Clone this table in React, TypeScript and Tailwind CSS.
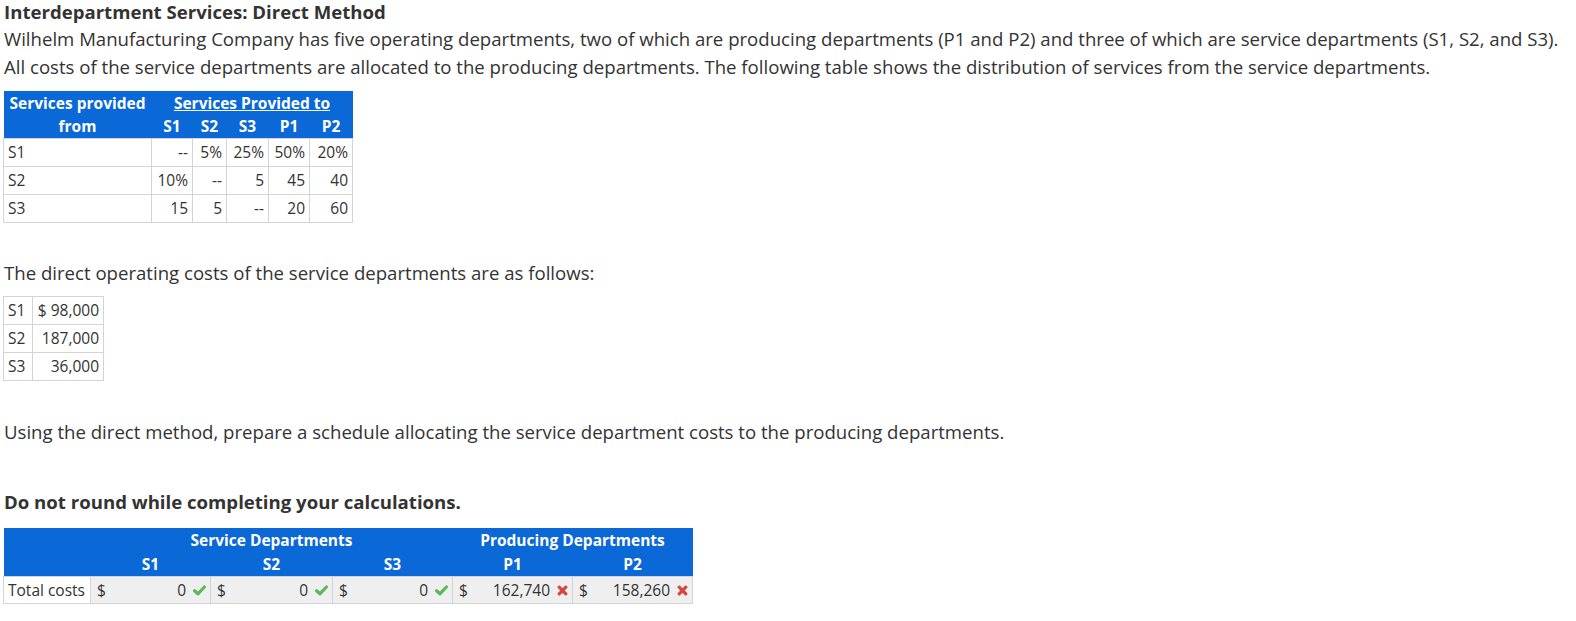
import React from 'react';

const BLUE = 'bg-[#0b68d7]';

function Check() {
    return (
        <svg width="13" height="11" viewBox="0 0 13 11" className="inline-block">
            <path d="M1.6 5.8 L4.9 8.8 L11.4 2" fill="none" stroke="#5cb85c" strokeWidth="3.2" strokeLinecap="round" strokeLinejoin="round" />
        </svg>
    );
}

function Cross() {
    return (
        <svg width="11" height="11" viewBox="0 0 11 11" className="inline-block">
            <path d="M2.2 2.2 L8.8 8.8 M8.8 2.2 L2.2 8.8" fill="none" stroke="#d9453b" strokeWidth="3.2" strokeLinecap="round" />
        </svg>
    );
}

const distribution = [
    ['S1', '--', '5%', '25%', '50%', '20%'],
    ['S2', '10%', '--', '5', '45', '40'],
    ['S3', '15', '5', '--', '20', '60'],
];

const costs = [
    ['S1', '$ 98,000'],
    ['S2', '187,000'],
    ['S3', '36,000'],
];

const totals = [
    { value: '0', ok: true },
    { value: '0', ok: true },
    { value: '0', ok: true },
    { value: '162,740', ok: false },
    { value: '158,260', ok: false },
];

export default function App() {
    return (
        <div className="bg-white min-h-[621px] text-[#333] px-[3px]" style={{ fontFamily: '"Open Sans", "Liberation Sans", sans-serif' }}>
            <div className="px-px">
                <h1 className="text-[18.6px] leading-[24px] font-bold">Interdepartment Services: Direct Method</h1>
                <p className="text-[18.6px] leading-[28px] mt-px">
                    Wilhelm Manufacturing Company has five operating departments, two of which are producing departments (P1 and P2) and three of which are service departments (S1, S2, and S3). All costs of the service departments are allocated to the producing departments. The following table shows the distribution of services from the service departments.
                </p>
            </div>

            {/* distribution of services */}
            <table className="mt-[10px] border-collapse text-[15.5px] leading-[20px]">
                <thead>
                    <tr className={`${BLUE} text-white font-bold`}>
                        <th className="w-[148px] h-[23px] text-center font-bold">Services provided</th>
                        <th colSpan={5} className="text-center font-bold underline">Services Provided to</th>
                    </tr>
                    <tr className={`${BLUE} text-white`}>
                        <th className="h-[24px] text-center font-bold">from</th>
                        <th className="w-[41px] text-center font-bold">S1</th>
                        <th className="w-[34px] text-center font-bold">S2</th>
                        <th className="w-[42px] text-center font-bold">S3</th>
                        <th className="w-[41px] text-center font-bold">P1</th>
                        <th className="w-[43px] text-center font-bold">P2</th>
                    </tr>
                </thead>
                <tbody>
                    {distribution.map((row) => (
                        <tr key={row[0]} className="h-[28px]">
                            {row.map((cell, i) => (
                                <td
                                    key={i}
                                    className={`border border-[#d4d4d4] px-[4px] font-normal ${i === 0 ? 'text-left' : 'text-right'}`}
                                >
                                    {cell}
                                </td>
                            ))}
                        </tr>
                    ))}
                </tbody>
            </table>

            <p className="px-px mt-[36px] text-[18.6px] leading-[28px]">The direct operating costs of the service departments are as follows:</p>

            <table className="mt-[9px] border-collapse text-[15.5px] leading-[20px]">
                <tbody>
                    {costs.map(([dept, amt]) => (
                        <tr key={dept} className="h-[28px]">
                            <td className="border border-[#d4d4d4] w-[29px] px-[4px] text-left">{dept}</td>
                            <td className="border border-[#d4d4d4] w-[71px] px-[4px] text-right">{amt}</td>
                        </tr>
                    ))}
                </tbody>
            </table>

            <p className="px-px mt-[37px] text-[18.6px] leading-[28px]">
                Using the direct method, prepare a schedule allocating the service department costs to the producing departments.
            </p>

            <p className="px-px mt-[42px] text-[18.6px] leading-[28px] font-bold">Do not round while completing your calculations.</p>

            {/* allocation schedule */}
            <table className="mt-[12px] border-collapse text-[15.5px] leading-[20px]">
                <thead>
                    <tr className={`${BLUE} text-white`}>
                        <th className="w-[87px] h-[24px]"></th>
                        <th colSpan={3} className="text-center font-bold">Service Departments</th>
                        <th colSpan={2} className="text-center font-bold">Producing Departments</th>
                    </tr>
                    <tr className={`${BLUE} text-white`}>
                        <th className="h-[25px]"></th>
                        <th className="w-[120px] text-center font-bold">S1</th>
                        <th className="w-[122px] text-center font-bold">S2</th>
                        <th className="w-[120px] text-center font-bold">S3</th>
                        <th className="w-[120px] text-center font-bold">P1</th>
                        <th className="w-[120px] text-center font-bold">P2</th>
                    </tr>
                </thead>
                <tbody>
                    <tr className="h-[27px]">
                        <td className="border border-[#d4d4d4] bg-white px-[4px] text-left whitespace-nowrap">Total costs</td>
                        {totals.map((t, i) => (
                            <td key={i} className="border border-[#d4d4d4] bg-[#efefef] pl-[6px] pr-[4px]">
                                <div className="flex items-center">
                                    <span>$</span>
                                    <span className="flex-1 text-right pr-[7px]">{t.value}</span>
                                    {t.ok ? <Check /> : <Cross />}
                                </div>
                            </td>
                        ))}
                    </tr>
                </tbody>
            </table>
        </div>
    );
}
